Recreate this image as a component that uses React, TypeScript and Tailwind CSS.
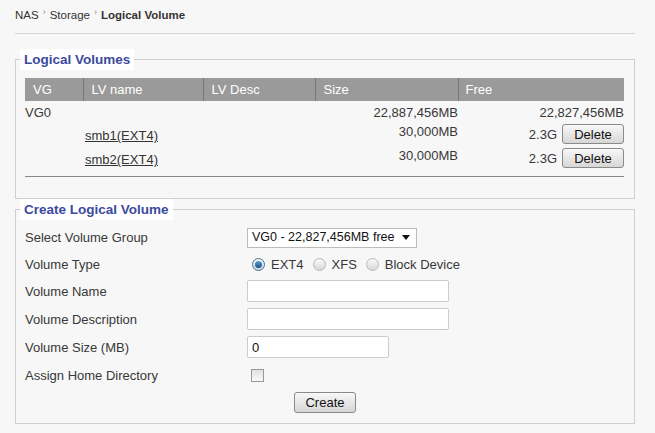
import React from "react";

const rows = [
    { name: "smb1(EXT4)", size: "30,000MB", free: "2.3G" },
    { name: "smb2(EXT4)", size: "30,000MB", free: "2.3G" },
];

const Radio: React.FC<{ checked?: boolean; label: string }> = ({ checked, label }) => (
    <label className="flex items-center gap-[6px]">
        <span
            className={[
                "w-[13px] h-[13px] rounded-full border flex items-center justify-center",
                checked
                    ? "border-[#4a6f8f] bg-gradient-to-b from-[#f4f8fb] to-[#c7d6e2]"
                    : "border-[#b8b8b8] bg-gradient-to-b from-[#fafafa] to-[#d8d8d8]",
            ].join(" ")}
        >
            {checked && <span className="w-[7px] h-[7px] rounded-full bg-gradient-to-b from-[#5d9fd1] to-[#1d4f80]" />}
        </span>
        <span>{label}</span>
    </label>
);

const FormRow: React.FC<{ label: string; h: string; children: React.ReactNode }> = ({ label, h, children }) => (
    <div className={["flex items-center", h].join(" ")}>
        <div className="w-[222px] shrink-0">{label}</div>
        <div className="flex items-center">{children}</div>
    </div>
);

const Btn: React.FC<{ children: React.ReactNode; w: string; h: string }> = ({ children, w, h }) => (
    <button
        className={[
            "rounded-[3px] border border-[#8a8a8a] bg-gradient-to-b from-[#f8f8f8] to-[#d6d6d6] text-[13px] text-[#111] leading-none",
            w,
            h,
        ].join(" ")}
    >
        {children}
    </button>
);

export default function App() {
    return (
        <div className="min-h-screen bg-[#f7f7f7] font-['Liberation_Sans',Arial,sans-serif] text-[13px] leading-[15px] text-[#383838]">
            <div className="ml-[15px] w-[620px]">

                {/* Breadcrumb */}
                <div className="h-[34px] border-b border-[#d6d6d6] flex items-center text-[11.5px] text-[#333] pb-[3px]">
                    <span>NAS</span>
                    <span className="mx-[4px] text-[9px] text-[#888] -translate-y-[3px]">›</span>
                    <span>Storage</span>
                    <span className="mx-[4px] text-[9px] text-[#888] -translate-y-[3px]">›</span>
                    <span className="font-bold">Logical Volume</span>
                </div>

                {/* Logical Volumes */}
                <fieldset className="mt-[15px] border border-[#cfcfcf]">
                    <legend className="ml-[4px] px-[4px] py-[3px] bg-white text-[13.5px] leading-[15px] font-bold text-[#3b4a9c]">
                        Logical Volumes
                    </legend>
                    <div className="pl-[9px] pr-[10px] pt-[8px] pb-[21px]">
                        <table className="w-[599px] border-collapse">
                            <thead>
                                <tr className="bg-[#9a9a9a] text-white h-[23px] text-left">
                                    <th className="font-normal w-[58px] px-[8px] border-r border-[#777]">VG</th>
                                    <th className="font-normal w-[120px] px-[8px] border-r border-[#777]">LV name</th>
                                    <th className="font-normal w-[112px] px-[8px] border-r border-[#777]">LV Desc</th>
                                    <th className="font-normal w-[143px] px-[8px] border-r border-[#777]">Size</th>
                                    <th className="font-normal px-[7px]">Free</th>
                                </tr>
                            </thead>
                            <tbody>
                                <tr className="h-[21px]">
                                    <td className="align-bottom pb-[2px]">VG0</td>
                                    <td></td>
                                    <td></td>
                                    <td className="text-right align-bottom pb-[2px]">22,887,456MB</td>
                                    <td className="text-right align-bottom pb-[2px]">22,827,456MB</td>
                                </tr>
                                {rows.map((r) => (
                                    <tr key={r.name} className="h-[24px]">
                                        <td></td>
                                        <td className="px-[2px] pt-[3px]">
                                            <a className="underline text-[#333]">{r.name}</a>
                                        </td>
                                        <td></td>
                                        <td className="text-right align-top pt-[2px]">{r.size}</td>
                                        <td className="text-right">
                                            <div className="flex items-center justify-end gap-[5px]">
                                                <span>{r.free}</span>
                                                <Btn w="w-[62px]" h="h-[20px]">Delete</Btn>
                                            </div>
                                        </td>
                                    </tr>
                                ))}
                            </tbody>
                        </table>
                        <div className="mt-[6px] w-[599px] border-t border-[#888]" />
                    </div>
                </fieldset>

                {/* Create Logical Volume */}
                <fieldset className="border border-[#cfcfcf]">
                    <legend className="ml-[4px] px-[4px] py-[3px] bg-white text-[13.5px] leading-[15px] font-bold text-[#3b4a9c]">
                        Create Logical Volume
                    </legend>
                    <div className="pl-[9px] pr-[10px] pt-[4px] pb-[10px] flex flex-col">
                        <FormRow label="Select Volume Group" h="h-[27px]">
                            <div className="w-[170px] h-[20px] border border-[#bbb] bg-white flex items-center justify-between pl-[4px] pr-[6px] text-[12.5px] text-[#111]">
                                <span>VG0 - 22,827,456MB free</span>
                                <svg width="8" height="5" viewBox="0 0 8 5"><path d="M0 0h8L4 5z" fill="#111" /></svg>
                            </div>
                        </FormRow>
                        <FormRow label="Volume Type" h="h-[26px]">
                            <div className="flex items-center gap-[9px] pl-[5px]">
                                <Radio checked label="EXT4" />
                                <Radio label="XFS" />
                                <Radio label="Block Device" />
                            </div>
                        </FormRow>
                        <FormRow label="Volume Name" h="h-[28px]">
                            <input className="w-[202px] h-[22px] border border-[#ccc] rounded-[2px] bg-white" />
                        </FormRow>
                        <FormRow label="Volume Description" h="h-[28px]">
                            <input className="w-[202px] h-[22px] border border-[#ccc] rounded-[2px] bg-white" />
                        </FormRow>
                        <FormRow label="Volume Size (MB)" h="h-[28px]">
                            <input defaultValue="0" className="w-[142px] h-[22px] border border-[#ccc] rounded-[2px] bg-white px-[4px] text-[13px] text-[#111]" />
                        </FormRow>
                        <FormRow label="Assign Home Directory" h="h-[28px]">
                            <span className="ml-[4px] w-[13px] h-[13px] border border-[#999] bg-gradient-to-b from-[#e2e2e2] to-[#f8f8f8]" />
                        </FormRow>
                        <div className="flex pl-[269px] pt-[3px]">
                            <Btn w="w-[62px]" h="h-[21px]">Create</Btn>
                        </div>
                    </div>
                </fieldset>
            </div>
        </div>
    );
}
